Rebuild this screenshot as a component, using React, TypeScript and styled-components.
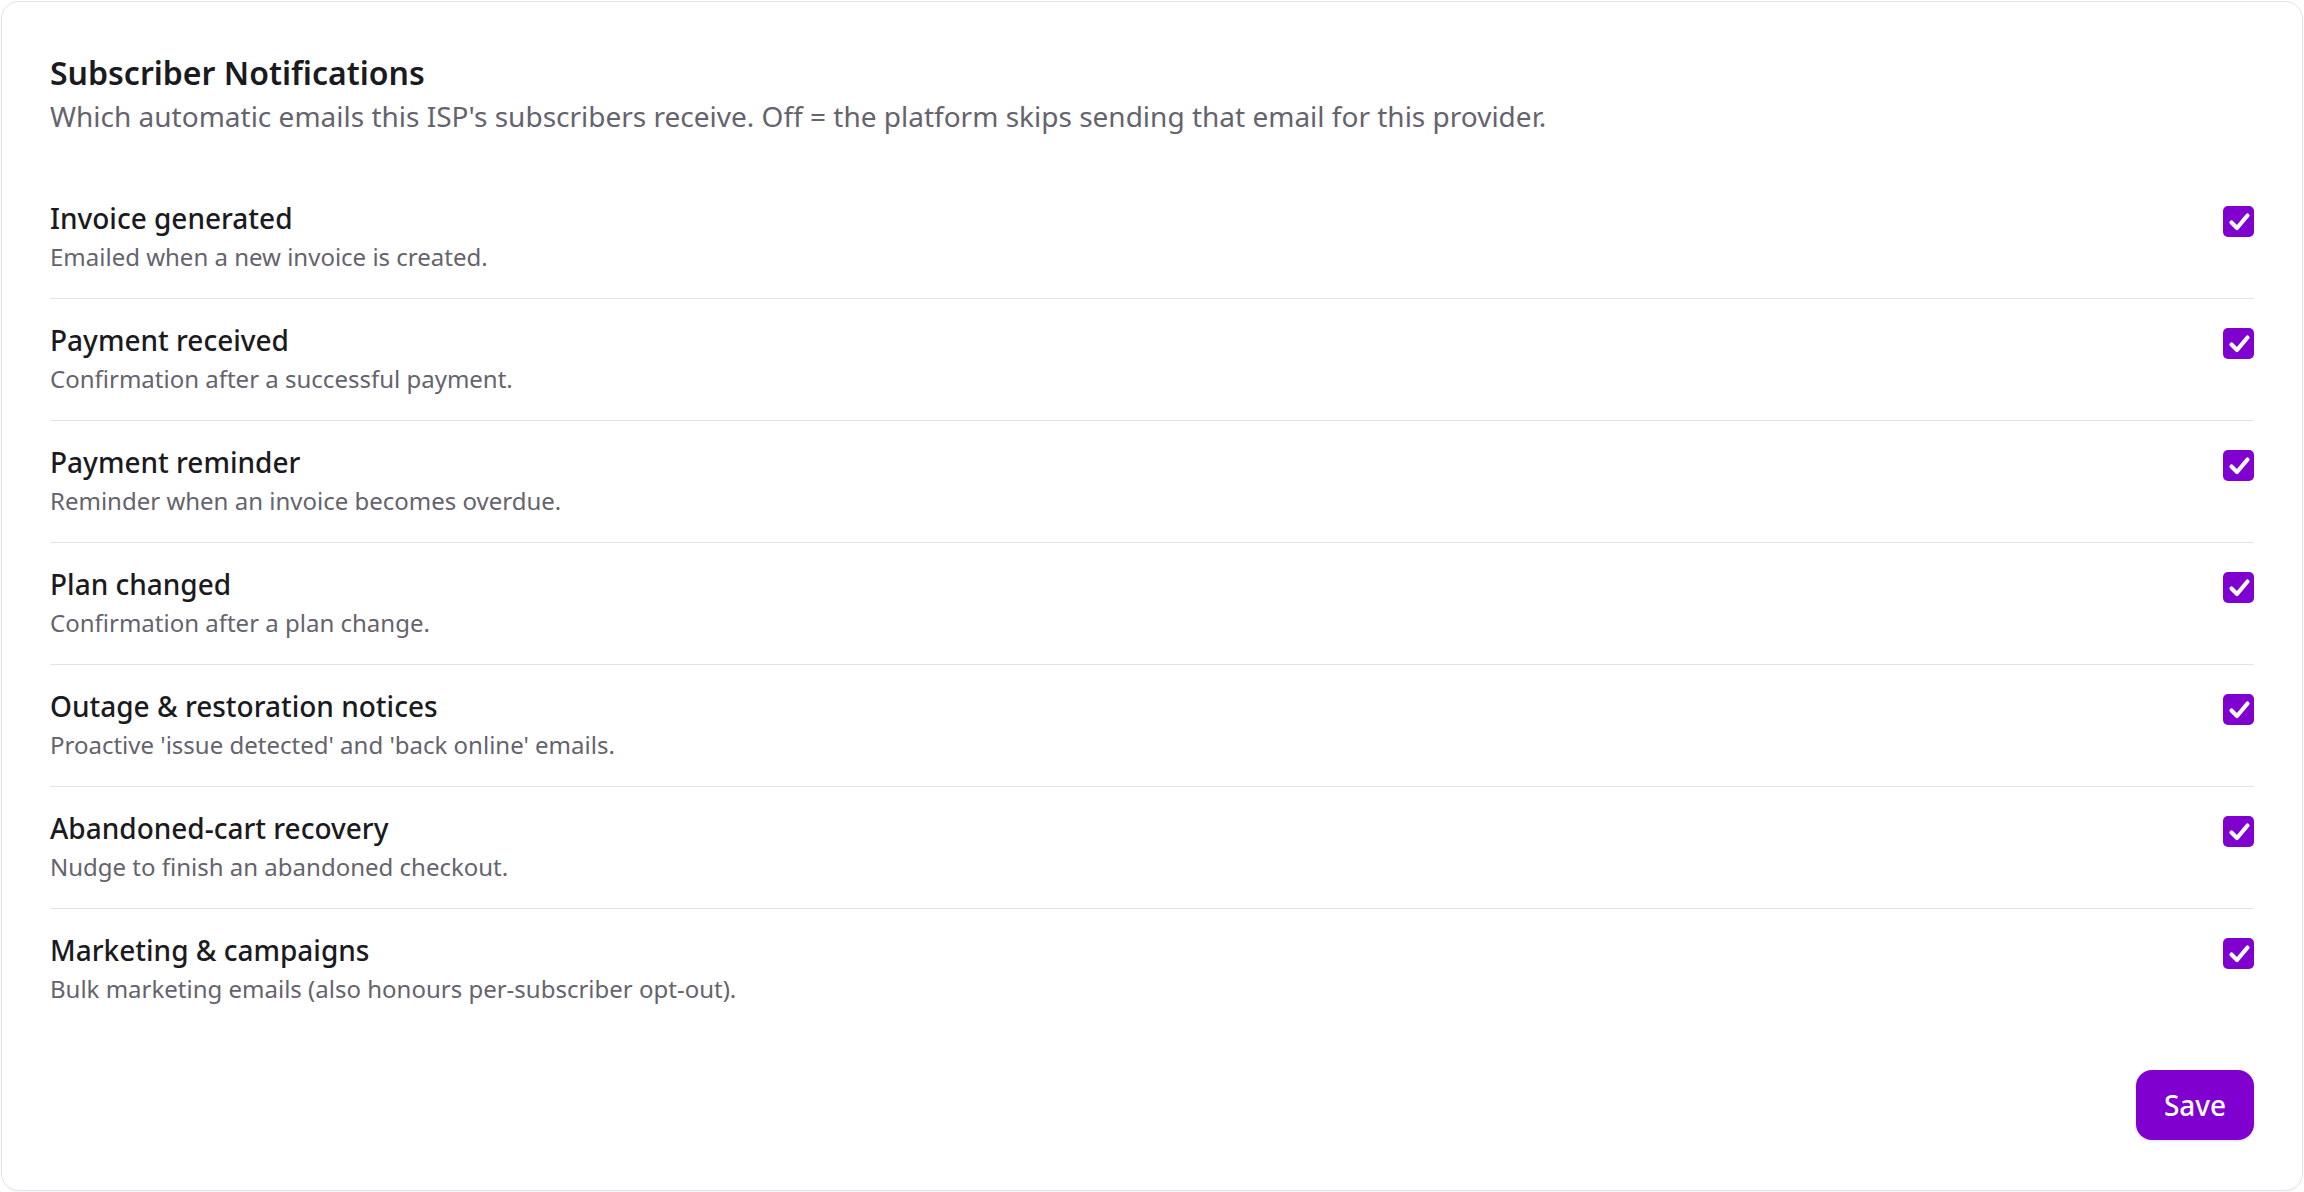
import React, { useState } from 'react'
import styled, { createGlobalStyle } from 'styled-components'

const GlobalStyle = createGlobalStyle`
  html, body {
    margin: 0;
    padding: 0;
    background: #ffffff;
  }
  body {
    padding: 1px;
    box-sizing: border-box;
    font-family: "Noto Sans", "Open Sans", sans-serif;
    -webkit-font-smoothing: antialiased;
  }
  * {
    box-sizing: border-box;
  }
`

const colors = {
  purple: '#8000d0',
  text: '#1b1a21',
  muted: '#65636e',
  border: '#e3e2e8',
}

type Notification = {
  id: string
  label: string
  hint: string
}

const NOTIFICATIONS: Notification[] = [
  { id: 'invoice', label: 'Invoice generated', hint: 'Emailed when a new invoice is created.' },
  { id: 'payment', label: 'Payment received', hint: 'Confirmation after a successful payment.' },
  { id: 'reminder', label: 'Payment reminder', hint: 'Reminder when an invoice becomes overdue.' },
  { id: 'plan', label: 'Plan changed', hint: 'Confirmation after a plan change.' },
  {
    id: 'outage',
    label: 'Outage & restoration notices',
    hint: "Proactive 'issue detected' and 'back online' emails.",
  },
  { id: 'cart', label: 'Abandoned-cart recovery', hint: 'Nudge to finish an abandoned checkout.' },
  {
    id: 'marketing',
    label: 'Marketing & campaigns',
    hint: 'Bulk marketing emails (also honours per-subscriber opt-out).',
  },
]

function Checkbox({ checked, onToggle }: { checked: boolean; onToggle: () => void }) {
  return (
    <Box type="button" role="checkbox" aria-checked={checked} $checked={checked} onClick={onToggle}>
      {checked && (
        <svg width="30" height="30" viewBox="0 0 30 30">
          <path
            d="M7.5 15.5 L13 21 L23.5 8.5"
            fill="none"
            stroke="#ffffff"
            strokeWidth="4.2"
            strokeLinecap="round"
            strokeLinejoin="round"
          />
        </svg>
      )}
    </Box>
  )
}

export default function App() {
  const [enabled, setEnabled] = useState<Record<string, boolean>>(() =>
    Object.fromEntries(NOTIFICATIONS.map((n) => [n.id, true]))
  )

  const toggle = (id: string) => setEnabled((prev) => ({ ...prev, [id]: !prev[id] }))

  return (
    <>
      <GlobalStyle />
      <Card>
        <Header>
          <Title>Subscriber Notifications</Title>
          <Subtitle>
            Which automatic emails this ISP's subscribers receive. Off = the platform skips sending
            that email for this provider.
          </Subtitle>
        </Header>
        <List>
          {NOTIFICATIONS.map((n) => (
            <Row key={n.id}>
              <RowText>
                <RowLabel>{n.label}</RowLabel>
                <RowHint>{n.hint}</RowHint>
              </RowText>
              <Checkbox checked={enabled[n.id]} onToggle={() => toggle(n.id)} />
            </Row>
          ))}
        </List>
        <Footer>
          <SaveButton type="button">Save</SaveButton>
        </Footer>
      </Card>
    </>
  )
}

const Card = styled.div`
  display: flex;
  flex-direction: column;
  min-height: calc(100vh - 2px);
  padding: 48px;
  border: 1px solid ${colors.border};
  border-radius: 18px;
  background: #ffffff;
  box-shadow: 0 1px 2px rgba(20, 16, 40, 0.04);
`

const Header = styled.div`
  display: flex;
  flex-direction: column;
  margin-bottom: 40px;
`

const Title = styled.h2`
  margin: 0;
  font-size: 32px;
  line-height: 45px;
  font-weight: 600;
  color: ${colors.text};
`

const Subtitle = styled.p`
  margin: 0;
  font-size: 28px;
  line-height: 42px;
  color: ${colors.muted};
`

const List = styled.div`
  display: flex;
  flex-direction: column;
`

const Row = styled.div`
  display: flex;
  align-items: flex-start;
  justify-content: space-between;
  gap: 24px;
  padding: 20px 0 23px;
  border-bottom: 1px solid ${colors.border};

  &:last-child {
    border-bottom: none;
  }
`

const RowText = styled.div`
  display: flex;
  flex-direction: column;
`

const RowLabel = styled.div`
  font-size: 28px;
  line-height: 42px;
  font-weight: 500;
  color: ${colors.text};
`

const RowHint = styled.div`
  font-size: 24px;
  line-height: 36px;
  color: ${colors.muted};
`

const Box = styled.button<{ $checked: boolean }>`
  flex: none;
  display: flex;
  align-items: center;
  justify-content: center;
  width: 31px;
  height: 31px;
  margin-top: 9px;
  padding: 0;
  border-radius: 5px;
  border: ${(p) => (p.$checked ? 'none' : `2px solid ${colors.muted}`)};
  background: ${(p) => (p.$checked ? colors.purple : '#ffffff')};
  cursor: pointer;
`

const Footer = styled.div`
  display: flex;
  justify-content: flex-end;
  margin-top: 40px;
`

const SaveButton = styled.button`
  height: 70px;
  padding: 0 27px;
  min-width: 118px;
  border: none;
  border-radius: 16px;
  background: ${colors.purple};
  color: #ffffff;
  font-family: "Noto Sans", "Open Sans", sans-serif;
  font-size: 28px;
  font-weight: 500;
  cursor: pointer;
  box-shadow: 0 1px 3px rgba(60, 0, 110, 0.15);
`
